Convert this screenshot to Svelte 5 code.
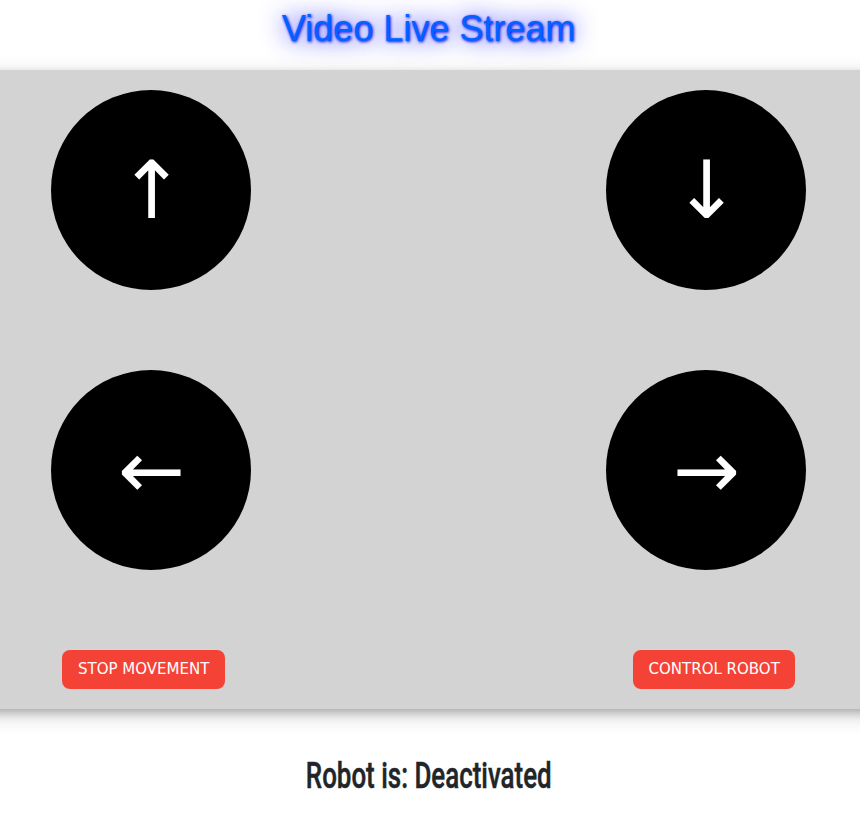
<script>
  let status = $state('Deactivated');
  const rows = [['↑', '↓'], ['←', '→']];
</script>

<main>
  <h1>Video Live Stream</h1>
  <section class="panel">
    {#each rows as row}
      <div class="row">
        {#each row as arrow}
          <button class="pad">{arrow}</button>
        {/each}
      </div>
    {/each}
    <div class="row actions">
      <button class="action" onclick={() => (status = 'Deactivated')}>STOP MOVEMENT</button>
      <button class="action" onclick={() => (status = 'Activated')}>CONTROL ROBOT</button>
    </div>
  </section>
  <h2><span>Robot is: {status}</span></h2>
</main>

<style>
  :global(body) {
    margin: 0;
    background: #fff;
    overflow: hidden;
  }
  main {
    height: 816px;
    display: flex;
    flex-direction: column;
    overflow: hidden;
  }
  h1 {
    box-sizing: border-box;
    height: 70px;
    margin: 0;
    padding: 2px 3px 0 0;
    font: 400 36px/54px "Liberation Sans", Arial, sans-serif;
    text-align: center;
    color: #0062ff;
    text-shadow: 1px 1px 3px blue, 0 0 25px blue;
  }
  .panel {
    box-sizing: border-box;
    height: 639px;
    margin: 0 -40px;
    padding: 20px 94px 0 91px;
    background: #d3d3d3;
    box-shadow: 0 4px 8px 0 rgba(0, 0, 0, 0.2), 0 6px 20px 0 rgba(0, 0, 0, 0.19);
  }
  .row {
    display: flex;
    justify-content: space-between;
    margin-bottom: 80px;
  }
  button {
    border: 0;
    color: #fff;
    font-family: "DejaVu Sans", sans-serif;
    cursor: pointer;
  }
  .pad {
    box-sizing: border-box;
    width: 200px;
    height: 200px;
    padding: 2px 0 0 1px;
    border-radius: 50%;
    background: #000;
    font-size: 80px;
    line-height: 120px;
  }
  .actions {
    padding: 0 10.6px 0 11px;
    margin: 0;
  }
  .action {
    padding: 8px 16px;
    border-radius: 8px;
    background: #f44336;
    font-size: 15px;
    line-height: 22.5px;
  }
  .action:last-child {
    padding: 8px 15.6px;
  }
  h2 {
    margin: 40px 2px 0 0;
    text-align: center;
    color: #212529;
    font: 500 36px/54px Roboto, sans-serif;
    white-space: nowrap;
  }
  h2 span {
    display: inline-block;
    transform: scaleX(0.72);
    -webkit-text-stroke: 0.5px #212529;
  }
</style>
